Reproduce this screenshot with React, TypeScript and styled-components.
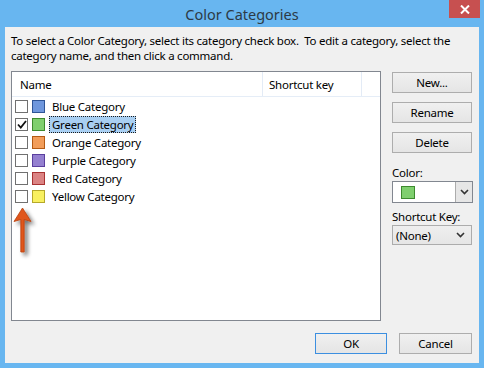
import React from "react";
import styled, { createGlobalStyle } from "styled-components";

const Global = createGlobalStyle`
  html, body { margin: 0; padding: 0; }
  body { font-family: "Noto Sans", "Open Sans", sans-serif; }
`;

const Window = styled.div`
  width: 484px;
  height: 368px;
  box-sizing: border-box;
  background: #68b6f0;
  padding: 0 5px 5px 5px;
  display: flex;
  flex-direction: column;
`;

const TitleBar = styled.div`
  position: relative;
  height: 28px;
  display: flex;
  align-items: center;
  justify-content: center;
  font-size: 14.5px;
  color: #2d3a46;
  padding-top: 1px;
  box-sizing: border-box;
`;

const CloseButton = styled.div`
  position: absolute;
  top: 0;
  right: -1px;
  width: 31px;
  height: 18px;
  background: #c75050;
  display: flex;
  align-items: center;
  justify-content: center;
`;

const Client = styled.div`
  flex: 1;
  background: #f0f0f0;
  display: flex;
  flex-direction: column;
  padding: 6px 6px 0 6px;
  font-size: 11.5px;
  letter-spacing: -0.25px;
  color: #000;
`;

const Intro = styled.div`
  line-height: 15px;
  margin-bottom: 8px;
  white-space: nowrap;
`;

const Main = styled.div`
  display: flex;
  gap: 11px;
`;

const ListBox = styled.div`
  position: relative;
  width: 371px;
  height: 250px;
  box-sizing: border-box;
  border: 1px solid #828790;
  background: #fff;
`;

const Header = styled.div`
  display: grid;
  grid-template-columns: 251px 99px 1fr;
  height: 24px;
  border-bottom: 1px solid #e5edf7;
`;

const HeaderCell = styled.div<{ $divider?: boolean; $first?: boolean }>`
  display: flex;
  align-items: center;
  padding-left: ${(p) => (p.$first ? "8px" : "6px")};
  border-right: ${(p) => (p.$divider ? "1px solid #e3ebf6" : "none")};
`;

const Rows = styled.div`
  display: flex;
  flex-direction: column;
`;

const Row = styled.div`
  display: flex;
  align-items: center;
  height: 18px;
  padding-left: 3px;
`;

const Check = styled.div`
  width: 13px;
  height: 13px;
  box-sizing: border-box;
  border: 1px solid #707070;
  background: #fff;
  display: flex;
  align-items: center;
  justify-content: center;
`;

const Swatch = styled.div<{ $fill: string; $edge: string }>`
  width: 13px;
  height: 13px;
  box-sizing: border-box;
  margin-left: 4px;
  background: ${(p) => p.$fill};
  border: 1px solid ${(p) => p.$edge};
`;

const Label = styled.div<{ $selected?: boolean }>`
  margin-left: 4px;
  padding: 0 2px 0 2px;
  height: 17px;
  display: flex;
  align-items: center;
  box-sizing: border-box;
  background: ${(p) => (p.$selected ? "#a9cff2" : "transparent")};
  border: 1px dotted ${(p) => (p.$selected ? "#1a1a1a" : "transparent")};
`;

const Arrow = styled.svg`
  position: absolute;
  left: 0px;
  top: 134px;
`;

const Side = styled.div`
  width: 81px;
  padding-top: 1px;
  display: flex;
  flex-direction: column;
`;

const Button = styled.div<{ $default?: boolean; $w?: number }>`
  width: ${(p) => (p.$w ? `${p.$w}px` : "80px")};
  height: 21px;
  box-sizing: border-box;
  border: 1px solid ${(p) => (p.$default ? "#3c8fe0" : "#adadad")};
  background: linear-gradient(#f0f0f0, #e5e5e5);
  display: flex;
  align-items: center;
  justify-content: center;
  margin-bottom: 9px;
`;

const FieldLabel = styled.div`
  margin-top: 2px;
  height: 17px;
  line-height: 17px;
`;

const ColorCombo = styled.div`
  width: 81px;
  height: 22px;
  box-sizing: border-box;
  border: 1px solid #828790;
  background: #fff;
  display: flex;
  align-items: stretch;
  margin-bottom: 3px;
`;

const ComboValue = styled.div`
  flex: 1;
  display: flex;
  align-items: center;
  padding-left: 8px;
`;

const ComboSwatch = styled.div`
  width: 14px;
  height: 13px;
  box-sizing: border-box;
  background: #7fcf6e;
  border: 1px solid #3d8a2e;
`;

const DropButton = styled.div`
  width: 17px;
  box-sizing: border-box;
  border-left: 1px solid #acacac;
  background: #e6e6e6;
  display: flex;
  align-items: center;
  justify-content: center;
`;

const KeyCombo = styled.div`
  width: 80px;
  height: 20px;
  box-sizing: border-box;
  border: 1px solid #acacac;
  background: linear-gradient(#efefef, #e6e6e6);
  display: flex;
  align-items: center;
  justify-content: space-between;
  padding: 0 6px 0 3px;
`;

const Footer = styled.div`
  display: flex;
  justify-content: flex-end;
  gap: 12px;
  margin-top: 12px;
  padding-right: 1px;
`;

const Chevron = () => (
  <svg width="9" height="6" viewBox="0 0 9 6">
    <path d="M1 1 L4.5 4.5 L8 1" fill="none" stroke="#333" strokeWidth="1.6" />
  </svg>
);

const categories = [
  { name: "Blue Category", fill: "#6f97dd", edge: "#2f5597" },
  { name: "Green Category", fill: "#7fcf6e", edge: "#3d8a2e", checked: true },
  { name: "Orange Category", fill: "#f29d5a", edge: "#b45a14" },
  { name: "Purple Category", fill: "#9480d0", edge: "#5a3f9e" },
  { name: "Red Category", fill: "#db8383", edge: "#a83232" },
  { name: "Yellow Category", fill: "#f8f060", edge: "#b5a82a" },
];

export default function App() {
  return (
    <>
      <Global />
      <Window>
        <TitleBar>
          Color Categories
          <CloseButton>
            <svg width="10" height="9" viewBox="0 0 10 9">
              <path d="M1 0.5 L9 8.5 M9 0.5 L1 8.5" stroke="#fff" strokeWidth="2" />
            </svg>
          </CloseButton>
        </TitleBar>
        <Client>
          <Intro>
            To select a Color Category, select its category check box.&nbsp; To edit a category, select the
            <br />
            category name, and then click a command.
          </Intro>
          <Main>
            <ListBox>
              <Header>
                <HeaderCell $divider $first>Name</HeaderCell>
                <HeaderCell $divider>Shortcut key</HeaderCell>
                <HeaderCell />
              </Header>
              <Rows>
                {categories.map((c) => (
                  <Row key={c.name}>
                    <Check>
                      {c.checked && (
                        <svg width="10" height="9" viewBox="0 0 10 9">
                          <path d="M1 4.5 L3.8 7.5 L9 1" fill="none" stroke="#111" strokeWidth="1.8" />
                        </svg>
                      )}
                    </Check>
                    <Swatch $fill={c.fill} $edge={c.edge} />
                    <Label $selected={c.checked}>{c.name}</Label>
                  </Row>
                ))}
              </Rows>
              <Arrow width="30" height="56" viewBox="0 0 30 56">
                <defs>
                  <filter id="sh" x="-50%" y="-50%" width="200%" height="200%">
                    <feGaussianBlur in="SourceAlpha" stdDeviation="2" />
                    <feOffset dx="3" dy="3" result="b" />
                    <feComponentTransfer>
                      <feFuncA type="linear" slope="0.55" />
                    </feComponentTransfer>
                    <feMerge>
                      <feMergeNode />
                      <feMergeNode in="SourceGraphic" />
                    </feMerge>
                  </filter>
                </defs>
                <g filter="url(#sh)">
                  <path
                    d="M10.5 2 L2 15.5 L8.8 13.5 L8.8 46 L12.2 46 L12.2 13.5 L19 15.5 Z"
                    fill="#e0561c"
                    stroke="#b8400e"
                    strokeWidth="0.8"
                    strokeLinejoin="round"
                  />
                </g>
              </Arrow>
            </ListBox>
            <Side>
              <Button>New...</Button>
              <Button>Rename</Button>
              <Button>Delete</Button>
              <FieldLabel>Color:</FieldLabel>
              <ColorCombo>
                <ComboValue>
                  <ComboSwatch />
                </ComboValue>
                <DropButton>
                  <Chevron />
                </DropButton>
              </ColorCombo>
              <FieldLabel>Shortcut Key:</FieldLabel>
              <KeyCombo>
                (None)
                <Chevron />
              </KeyCombo>
            </Side>
          </Main>
          <Footer>
            <Button $default $w={72}>OK</Button>
            <Button $w={73}>Cancel</Button>
          </Footer>
        </Client>
      </Window>
    </>
  );
}
